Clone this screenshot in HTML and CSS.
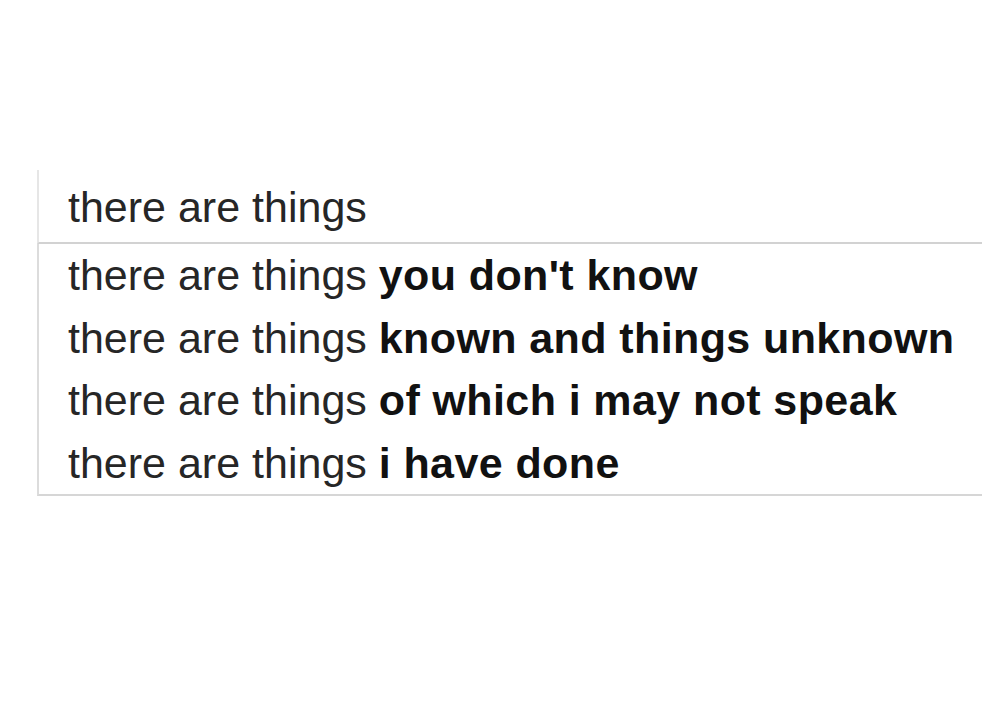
FILE: index.html
```html
<!DOCTYPE html>
<html lang="en">
<head>
  <meta charset="UTF-8" />
  <title>Search suggestions</title>
  <link rel="stylesheet" href="styles.css">
</head>
<body>
  <div class="search">
    <div class="query">there are things</div>
    <ul class="suggestions">
      <li>there are things <b>you don't know</b></li>
      <li>there are things <b>known and things unknown</b></li>
      <li>there are things <b>of which i may not speak</b></li>
      <li>there are things <b>i have done</b></li>
    </ul>
  </div>
</body>
</html>
```

FILE: styles.css
```css
* {
  box-sizing: border-box;
}

body {
  margin: 0;
  background: #fff;
  font-family: 'Liberation Sans', Arial, sans-serif;
  color: #222;
  height: 726px;
  overflow: hidden;
}

.search {
  margin: 170px 0 0 37px;
  font-size: 43px;
}

.query {
  height: 74px;
  line-height: 74px;
  padding-left: 29px;
  border-left: 2px solid #e6e6e6;
  border-bottom: 2px solid #d2d2d2;
  color: #262626;
}

.suggestions {
  list-style: none;
  margin: 0;
  padding: 0;
  border-left: 2px solid #dcdcdc;
  border-bottom: 2px solid #d6d6d6;
}

.suggestions li {
  height: 62.5px;
  line-height: 62.5px;
  padding-left: 29px;
  white-space: nowrap;
  color: #262626;
}

.suggestions b {
  color: #111;
  letter-spacing: 0.4px;
}
```
